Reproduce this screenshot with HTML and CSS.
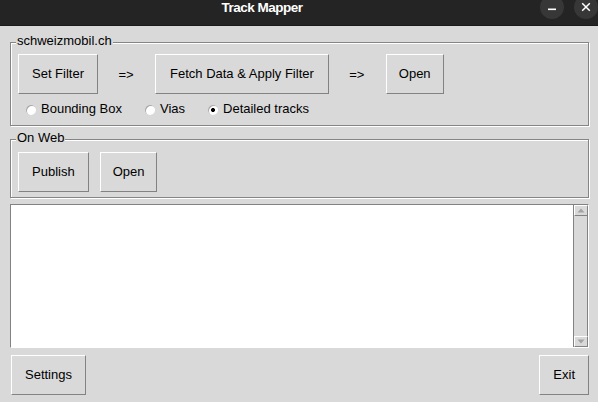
FILE: index.html
```html
<!DOCTYPE html>
<html>
<head>
<meta charset="utf-8">
<title>Track Mapper</title>
<link rel="stylesheet" href="styles.css">
</head>
<body>
<header class="titlebar">
  <div class="title">Track Mapper</div>
  <div class="wm-buttons">
    <span class="wm-btn"><svg width="24" height="24" viewBox="0 0 24 24"><path d="M8 14.3h8" stroke="#fff" stroke-width="1.6"/></svg></span>
    <span class="wm-btn"><svg width="24" height="24" viewBox="0 0 24 24"><path d="M8.2 8.2l7.6 7.6M15.8 8.2l-7.6 7.6" stroke="#fff" stroke-width="1.5"/></svg></span>
  </div>
</header>
<main class="content">
  <section class="group g1">
    <div class="group-label">schweizmobil.ch</div>
    <div class="btn-row">
      <button class="btn">Set Filter</button>
      <span class="arrow">=&gt;</span>
      <button class="btn wide">Fetch Data &amp; Apply Filter</button>
      <span class="arrow">=&gt;</span>
      <button class="btn narrow">Open</button>
    </div>
    <div class="radio-row">
      <label class="radio"><span class="dot"></span>Bounding Box</label>
      <label class="radio"><span class="dot"></span>Vias</label>
      <label class="radio"><span class="dot checked"></span>Detailed tracks</label>
    </div>
  </section>
  <section class="group g2">
    <div class="group-label">On Web</div>
    <div class="btn-row web-row">
      <button class="btn">Publish</button>
      <button class="btn narrow">Open</button>
    </div>
  </section>
  <div class="log">
    <div class="log-text"></div>
    <div class="scrollbar">
      <span class="sb-btn up"><svg width="12" height="9" viewBox="0 0 12 9"><path d="M2.5 6.5h7L6 2.5z" fill="#a3a3a3"/></svg></span>
      <span class="trough"></span>
      <span class="sb-btn down"><svg width="12" height="9" viewBox="0 0 12 9"><path d="M2.5 2.5h7L6 6.5z" fill="#a3a3a3"/></svg></span>
    </div>
  </div>
  <div class="footer">
    <button class="btn settings">Settings</button>
    <button class="btn">Exit</button>
  </div>
</main>
</body>
</html>
```
FILE: styles.css
```css
* { box-sizing: border-box; }
html, body { margin: 0; padding: 0; }
body {
  width: 598px;
  height: 402px;
  overflow: hidden;
  background: #d9d9d9;
  font-family: "Liberation Sans", Arial, sans-serif;
  font-size: 13px;
  color: #000;
}

.titlebar {
  height: 26px;
  background: #242424;
  border-bottom: 1px solid #1a1a1a;
  display: flex;
  align-items: flex-start;
  overflow: hidden;
}
.title {
  flex: 1;
  text-align: center;
  color: #fff;
  font-weight: bold;
  font-size: 13.5px;
  line-height: 15px;
  letter-spacing: -0.5px;
  padding-right: 16px;
}
.wm-buttons {
  display: flex;
  gap: 10px;
  margin-top: -5px;
}
.wm-btn {
  width: 24px;
  height: 24px;
  border-radius: 50%;
  background: #373737;
  display: flex;
}

.content {
  padding: 16px 9px 0 10px;
  display: flex;
  flex-direction: column;
}

.group {
  border: 1px solid #858585;
  box-shadow: inset 1px 1px 0 #fff, 1px 1px 0 #fff;
  padding: 0 0 9px 7px;
}
.g2 {
  margin-top: 13px;
  padding-bottom: 5px;
}
.group-label {
  width: fit-content;
  margin: -10px 0 0 -2px;
  padding: 0 1px;
  background: #d9d9d9;
  line-height: 15px;
}

.btn-row {
  display: flex;
  align-items: center;
  margin-top: 6px;
}
.web-row {
  margin-top: 7px;
  gap: 11px;
}
.btn {
  font: inherit;
  color: #000;
  background: #d9d9d9;
  height: 40px;
  margin: 0;
  padding: 0 13px 1px;
  border: 1px solid;
  border-color: #fff #828282 #828282 #fff;
  border-radius: 0;
  line-height: 15px;
}
.btn.wide {
  padding: 0 14px 1px;
}
.btn.narrow {
  padding: 0 12px 1px;
}
.arrow {
  width: 16px;
  margin: 0 21px 0 20px;
  text-align: center;
  line-height: 15px;
}

.radio-row {
  display: flex;
  gap: 23px;
  margin-top: 7px;
  padding-left: 8px;
  line-height: 15px;
}
.radio {
  display: flex;
  align-items: flex-start;
  gap: 5px;
}
.dot {
  width: 10px;
  height: 10px;
  margin-top: 4px;
  border-radius: 50%;
  background: #fff;
  box-shadow: inset 1px 1px 0 #a8a8a8;
}
.dot.checked {
  background: radial-gradient(circle at 5px 5px, #000 0 1.7px, #fff 2.3px);
}

.log {
  margin-top: 6px;
  height: 144px;
  display: flex;
  border: 1px solid;
  border-color: #828282 #fff #fff #828282;
}
.log-text {
  flex: 1;
  background: #fff;
}
.scrollbar {
  width: 15px;
  display: flex;
  flex-direction: column;
  background: #d9d9d9;
  border-left: 1px solid #828282;
}
.sb-btn {
  height: 11px;
  display: flex;
  align-items: center;
  justify-content: center;
  border: 1px solid;
  border-color: #fff #828282 #828282 #fff;
}
.trough {
  flex: 1;
  border-right: 1px solid #828282;
}

.footer {
  margin-top: 7px;
  display: flex;
  justify-content: space-between;
}
.settings {
  margin-left: 1px;
}
```
